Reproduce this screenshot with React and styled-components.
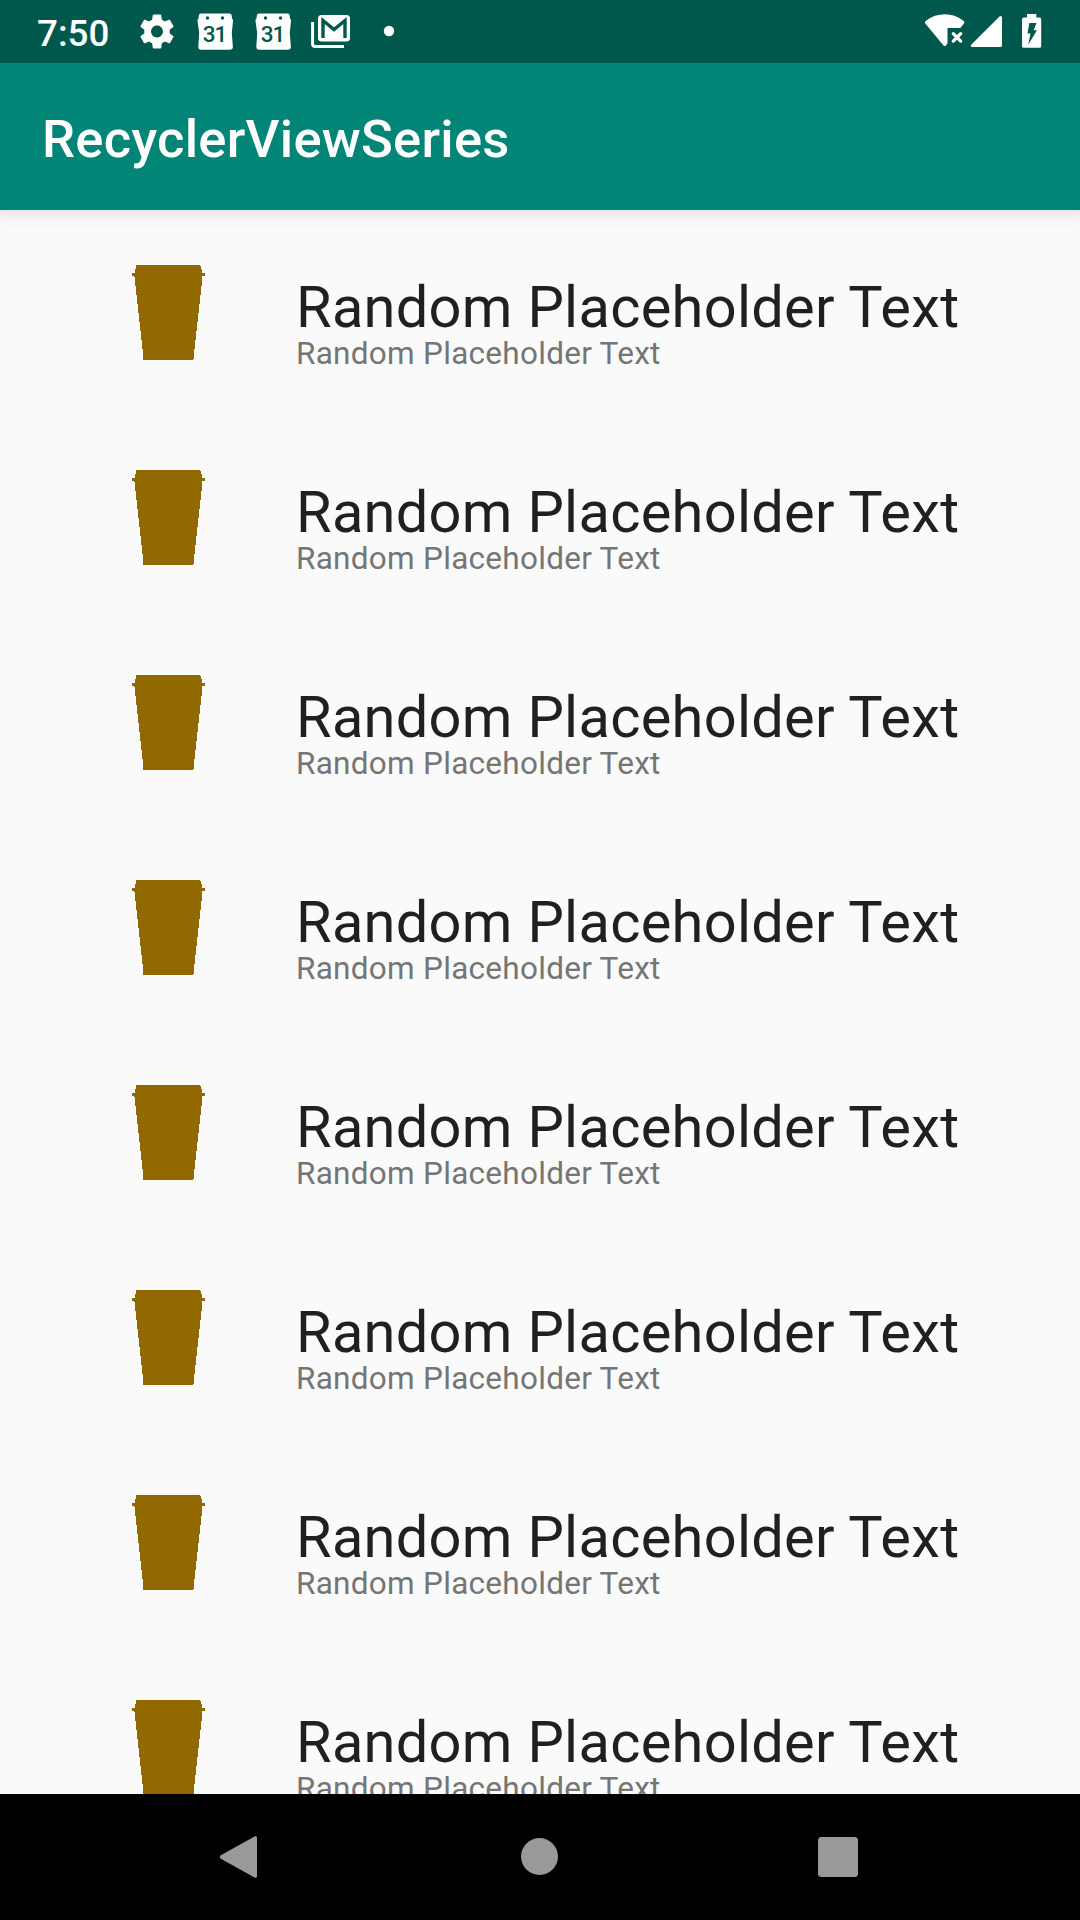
import React from "react";
import styled, { createGlobalStyle } from "styled-components";

const GlobalStyle = createGlobalStyle`
  * { box-sizing: border-box; }
  body { margin: 0; background: #fafafa; font-family: Roboto, "Noto Sans", sans-serif; }
`;

const Screen = styled.div`
  display: flex;
  flex-direction: column;
  width: 1080px;
  height: 1920px;
  overflow: hidden;
  background: #fafafa;
`;

const StatusBar = styled.header`
  flex: none;
  position: relative;
  z-index: 2;
  display: flex;
  justify-content: space-between;
  height: 63px;
  padding: 0 33px 0 37px;
  background: #00574b;
`;

const Notifications = styled.div`
  display: flex;
  align-items: center;
  gap: 18px;
`;

const Clock = styled.time`
  width: 82px;
  padding-top: 4px;
  color: #fff;
  font-size: 36.75px;
  font-weight: 500;
  line-height: 43px;
  white-space: nowrap;
`;

const SystemIcons = styled.div`
  display: flex;
  align-items: center;
`;

const Glyph = styled.svg`
  flex: none;
  display: block;
  width: ${(p) => p.$w || 40}px;
  height: ${(p) => p.$h || 63}px;
  fill: ${(p) => p.$color || "#fff"};
`;

const DateText = styled.text`
  fill: #00574b;
  font-size: 22.5px;
  font-weight: 500;
  letter-spacing: -1px;
`;

const AppBar = styled.div`
  flex: none;
  position: relative;
  z-index: 1;
  display: flex;
  align-items: center;
  height: 147px;
  padding: 5px 42px 0;
  background: #008577;
  box-shadow: 0 -6px 16px 8px rgba(0, 0, 0, 0.13);
`;

const Title = styled.h1`
  margin: 0;
  color: #fff;
  font-size: 52.5px;
  font-weight: 500;
  letter-spacing: 0.27px;
  line-height: 62px;
`;

const List = styled.ul`
  flex: 1;
  min-height: 0;
  margin: 0;
  padding: 0;
  overflow: hidden;
  list-style: none;
`;

const Row = styled.li`
  display: flex;
  align-items: flex-start;
  gap: 91px;
  height: 205px;
  padding: 55px 100px 0 132px;
`;

const Labels = styled.div`
  display: flex;
  flex-direction: column;
  padding-top: 8px;
`;

const Headline = styled.span`
  color: #202020;
  font-size: 57.75px;
  letter-spacing: 0.29px;
  line-height: 68px;
  white-space: nowrap;
`;

const Caption = styled.span`
  margin-top: -6px;
  color: #757575;
  font-size: 31.5px;
  letter-spacing: 0.28px;
  line-height: 37px;
  white-space: nowrap;
`;

const NavBar = styled.nav`
  flex: none;
  display: flex;
  justify-content: center;
  height: 126px;
  background: #000;
`;

const NavButton = styled.button`
  display: flex;
  align-items: center;
  justify-content: center;
  width: 299px;
  padding: 0;
  border: 0;
  background: none;
`;

const Gear = () => (
  <Glyph viewBox="0 0 40 63">
    <path
      transform="translate(-0.4 11.1) scale(1.7)"
      d="M19.43 12.98c.04-.32.07-.64.07-.98s-.03-.66-.07-.98l2.11-1.65c.19-.15.24-.42.12-.64l-2-3.46c-.12-.22-.39-.3-.61-.22l-2.49 1c-.52-.4-1.08-.73-1.69-.98l-.38-2.65C14.46 2.18 14.25 2 14 2h-4c-.25 0-.46.18-.49.42l-.38 2.65c-.61.25-1.17.59-1.69.98l-2.49-1c-.23-.09-.49 0-.61.22l-2 3.46c-.13.22-.07.49.12.64l2.11 1.65c-.04.32-.07.65-.07.98s.03.66.07.98l-2.11 1.65c-.19.15-.24.42-.12.64l2 3.46c.12.22.39.3.61.22l2.49-1c.52.4 1.08.73 1.69.98l.38 2.65c.03.24.24.42.49.42h4c.25 0 .46-.18.49-.42l.38-2.65c.61-.25 1.17-.59 1.69-.98l2.49 1c.23.09.49 0 .61-.22l2-3.46c.12-.22.07-.49-.12-.64l-2.11-1.65zM12 15.5c-1.93 0-3.5-1.57-3.5-3.5s1.57-3.5 3.5-3.5 3.5 1.57 3.5 3.5-1.57 3.5-3.5 3.5z"
    />
  </Glyph>
);

const Calendar = () => (
  <Glyph viewBox="0 0 40 63">
    <path d="M6 13.5h28.500q2 0 2.200 2l.3 3q1.200.8 1 2.500l-1.200 12 1.100 14q0 2.500-2.500 2.700H5.500q-2.200-.2-2.200-2.700l.9-14L2.500 21q-.3-1.700 1-2.500l.3-3q.2-2 2.200-2z" />
    <circle cx="12.500" cy="18" r="1.700" fill="#00574b" />
    <circle cx="27.500" cy="18" r="1.700" fill="#00574b" />
    <DateText x="19.500" y="42.300" textAnchor="middle">31</DateText>
  </Glyph>
);

const Mail = () => (
  <Glyph viewBox="0 0 40 63">
    <path d="M1.600 22v22q0 2.500 2.500 2.500H33" fill="none" stroke="#fff" strokeWidth="3" />
    <rect x="7" y="15" width="32" height="26.500" rx="3.500" />
    <path d="M12 38V20.500l11 9 11-9V38" fill="none" stroke="#00574b" strokeWidth="3.400" />
  </Glyph>
);

const Dot = () => (
  <Glyph viewBox="0 0 40 63">
    <circle cx="20" cy="31" r="5.200" />
  </Glyph>
);

const Wifi = () => (
  <Glyph viewBox="0 0 40 63" $w={40}>
    <path d="M.3 23.500q-1-1.600.8-2.800Q9.500 14.300 19.700 14.300T38.300 20.700q1.800 1.200.7 2.800L35.300 28H22.500V43.300l-1.600 2.200q-1.200 1-2.400 0z" />
    <path d="M28.300 33.700l7.400 7.400M35.700 33.700l-7.400 7.400" fill="none" stroke="#fff" strokeWidth="3.300" strokeLinecap="round" />
  </Glyph>
);

const Signal = () => (
  <Glyph viewBox="0 0 50 63" $w={50}>
    <path d="M37 17.500V45.500q0 1.500-1.500 1.500H7q-2-.5-.8-2.300L34.500 16.400q2-1 2.500 1.100z" />
  </Glyph>
);

const Battery = () => (
  <Glyph viewBox="0 0 32 63" $w={32}>
    <path
      fillRule="evenodd"
      d="M12 14h9.300v3.500h3.200q1.700 0 1.700 1.700v27q0 1.600-1.700 1.600H8.700Q7 47.800 7 46.200v-27q0-1.700 1.700-1.700H12zM14.300 23l-1.800 10.500h3L13.300 44.500 22 30.300h-3.300L21.500 23z"
    />
  </Glyph>
);

const Cup = () => (
  <Glyph viewBox="0 0 73 95" $w={73} $h={95} $color="#926900" shapeRendering="crispEdges">
    <path d="M4 0H68V1H69V4H70V8H73V11H70V21H69V30H68V39H67V48H66V57H65V66H64V75H63V84H62V94H61V95H11V94H11V84H10V75H9V66H8V57H7V48H6V39H5V30H4V21H3V12H2V11H0V8H3V4H4z" />
  </Glyph>
);

const navShapes = {
  Back: <path d="M38 3.300q2-.6 2 1.500V43.200q0 2.100-2 1.500L3.800 25.700q-2-1.700 0-3.400z" />,
  Home: <circle cx="23.500" cy="23.500" r="18.500" />,
  Recents: <rect x="3" y="4" width="40" height="40" rx="3.500" />,
};

const items = Array.from({ length: 8 }, (_, id) => ({
  id,
  title: "Random Placeholder Text",
  subtitle: "Random Placeholder Text",
}));

export default function App() {
  return (
    <Screen>
      <GlobalStyle />
      <StatusBar>
        <Notifications>
          <Clock>7:50</Clock>
          <Gear />
          <Calendar />
          <Calendar />
          <Mail />
          <Dot />
        </Notifications>
        <SystemIcons>
          <Wifi />
          <Signal />
          <Battery />
        </SystemIcons>
      </StatusBar>
      <AppBar>
        <Title>RecyclerViewSeries</Title>
      </AppBar>
      <List>
        {items.map((item) => (
          <Row key={item.id}>
            <Cup />
            <Labels>
              <Headline>{item.title}</Headline>
              <Caption>{item.subtitle}</Caption>
            </Labels>
          </Row>
        ))}
      </List>
      <NavBar>
        {Object.entries(navShapes).map(([name, shape]) => (
          <NavButton key={name} aria-label={name}>
            <Glyph viewBox="0 0 48 48" $w={48} $h={48} $color="#999">
              {shape}
            </Glyph>
          </NavButton>
        ))}
      </NavBar>
    </Screen>
  );
}
